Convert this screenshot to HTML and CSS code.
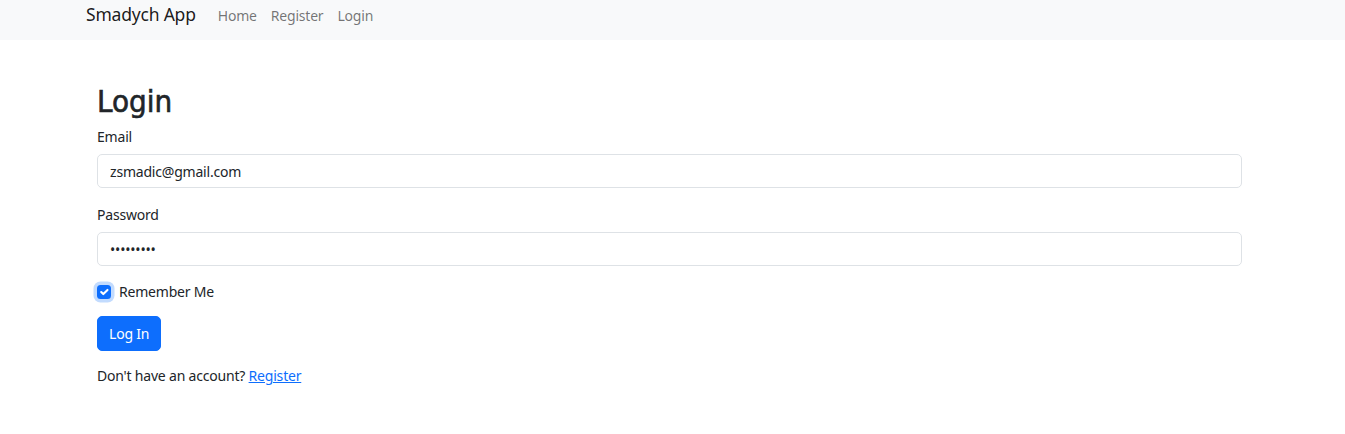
FILE: index.html
```html
<!DOCTYPE html>
<html lang="en">
<head>
<meta charset="utf-8">
<title>Login - Smadych App</title>
<link rel="stylesheet" href="styles.css">
</head>
<body>
<header class="navbar">
  <div class="nav-inner">
    <a class="brand" href="#">Smadych App</a>
    <nav class="nav-links">
      <a class="nav-link" href="#">Home</a>
      <a class="nav-link" href="#">Register</a>
      <a class="nav-link" href="#">Login</a>
    </nav>
  </div>
</header>
<main class="content">
  <h1 class="title">Login</h1>
  <form class="form">
    <div class="group">
      <label class="label" for="email">Email</label>
      <input class="control" id="email" type="email" value="zsmadic@gmail.com">
    </div>
    <div class="group last">
      <label class="label" for="password">Password</label>
      <input class="control" id="password" type="password" value="zsmadic12">
    </div>
    <div class="check-row">
      <span class="check">
        <svg viewBox="0 0 20 20" width="14" height="14"><path fill="none" stroke="#fff" stroke-linecap="round" stroke-linejoin="round" stroke-width="3" d="M6 10l3 3l6-6"/></svg>
      </span>
      <label class="check-label">Remember Me</label>
    </div>
    <button type="button" class="btn">Log In</button>
    <p class="alt">Don't have an account? <a href="#" class="link">Register</a></p>
  </form>
</main>
</body>
</html>
```
FILE: styles.css
```css
* { box-sizing: border-box; }
html, body { margin: 0; padding: 0; }
body {
  font-family: "Noto Sans", "Open Sans", sans-serif;
  font-size: 14px;
  line-height: 1.5;
  letter-spacing: -0.2px;
  color: #212529;
  background: #fff;
}
.navbar {
  background: #f8f9fa;
  height: 40px;
}
.nav-inner {
  padding-left: 86px;
  display: flex;
  align-items: flex-start;
}
.brand {
  font-size: 17.5px;
  line-height: 26px;
  padding-top: 1px;
  color: rgba(0,0,0,.9);
  text-decoration: none;
  margin-right: 15px;
}
.nav-links {
  display: flex;
  padding-top: 5px;
}
.nav-link {
  color: rgba(0,0,0,.55);
  text-decoration: none;
  padding: 0 7px;
  line-height: 21px;
}
.content {
  width: 1145px;
  margin-left: 97px;
  padding-top: 40px;
}
.title {
  font-family: "DejaVu Sans Condensed", "DejaVu Sans", sans-serif;
  font-size: 31px;
  font-weight: 400;
  letter-spacing: 0;
  line-height: 42px;
  margin: 0 0 4px;
  color: #212529;
  -webkit-text-stroke: 0.6px #212529;
}
.group { margin-bottom: 16px; }
.group.last { margin-bottom: 15px; }
.label {
  display: block;
  margin-bottom: 7px;
  line-height: 21px;
}
.control {
  display: block;
  width: 100%;
  height: 34px;
  padding: 5px 12px;
  font: inherit;
  letter-spacing: -0.2px;
  color: #212529;
  border: 1px solid #dee2e6;
  border-radius: 5px;
  background: #fff;
}
.check-row {
  display: flex;
  align-items: center;
  height: 21px;
  margin-bottom: 14px;
}
.check {
  width: 14px;
  height: 14px;
  border-radius: 3.5px;
  background: #0d6efd;
  box-shadow: 0 0 0 3.5px rgba(13,110,253,.25);
  display: flex;
  align-items: center;
  justify-content: center;
  margin-right: 8px;
}
.btn {
  display: block;
  font: inherit;
  letter-spacing: -0.2px;
  color: #fff;
  background: #0d6efd;
  border: 1px solid #0d6efd;
  border-radius: 5px;
  height: 35px;
  padding: 0 11px;
  margin-bottom: 14px;
}
.alt { margin: 0; line-height: 21px; }
.link { color: #0d6efd; }
```
